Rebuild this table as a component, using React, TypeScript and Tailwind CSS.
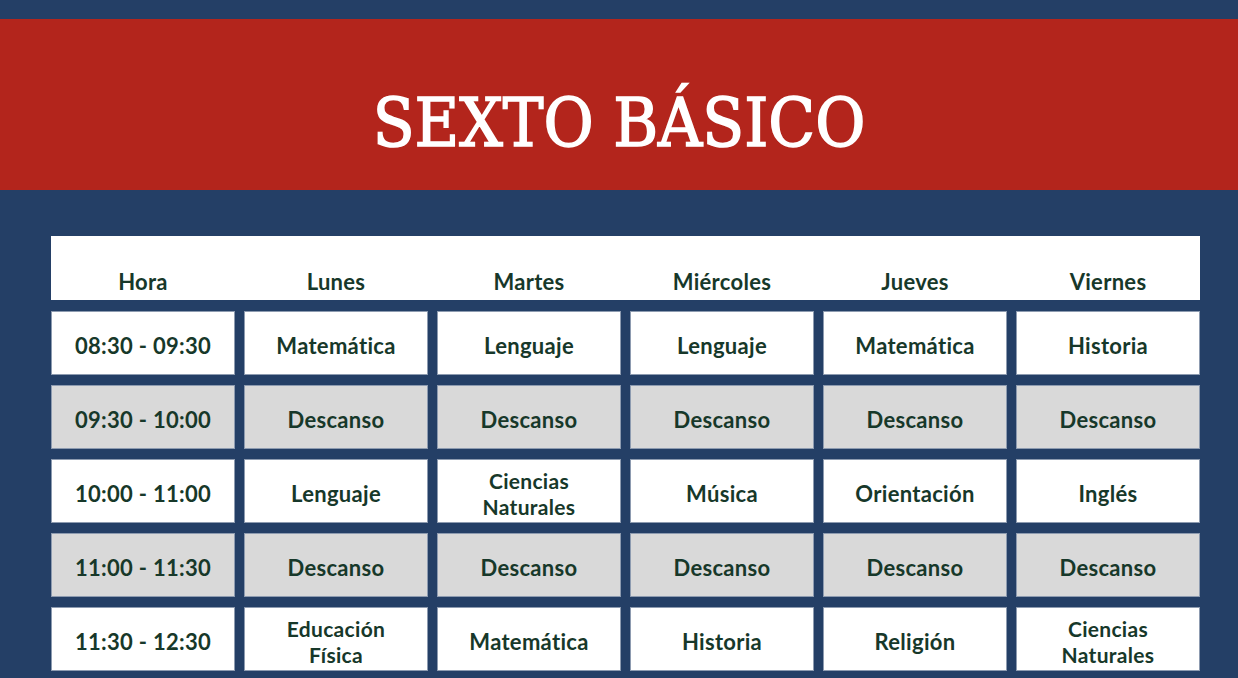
import React from 'react'

const days = ['Lunes', 'Martes', 'Miércoles', 'Jueves', 'Viernes']

const rows: { time: string; cells: string[][]; rest?: boolean }[] = [
  { time: '08:30 - 09:30', cells: [['Matemática'], ['Lenguaje'], ['Lenguaje'], ['Matemática'], ['Historia']] },
  { time: '09:30 - 10:00', cells: [['Descanso'], ['Descanso'], ['Descanso'], ['Descanso'], ['Descanso']], rest: true },
  { time: '10:00 - 11:00', cells: [['Lenguaje'], ['Ciencias', 'Naturales'], ['Música'], ['Orientación'], ['Inglés']] },
  { time: '11:00 - 11:30', cells: [['Descanso'], ['Descanso'], ['Descanso'], ['Descanso'], ['Descanso']], rest: true },
  { time: '11:30 - 12:30', cells: [['Educación', 'Física'], ['Matemática'], ['Historia'], ['Religión'], ['Ciencias', 'Naturales']] },
]

const Cell = ({ lines, rest }: { lines: string[]; rest?: boolean }) => (
  <div
    className={`h-[64px] flex items-center justify-center pt-[6px] border border-[#8d9bb0] ${
      rest ? 'bg-[#d9d9d9]' : 'bg-white'
    }`}
  >
    <p className={`text-center ${lines.length > 1 ? 'text-[21px] leading-[26px]' : 'leading-[24px]'}`}>
      {lines.map((l, i) => (
        <React.Fragment key={l}>
          {i > 0 && <br />}
          {l}
        </React.Fragment>
      ))}
    </p>
  </div>
)

export default function App() {
  return (
    <div className="w-[1238px] h-[678px] overflow-hidden bg-[#243f66] pt-[19px]">
      {/* banner */}
      <div className="h-[171px] bg-[#b3251c] flex items-center justify-center">
        <h1 className="text-white text-[68px] leading-none pt-[36px] [-webkit-text-stroke:1.5px_white] font-['DejaVu_Serif_Condensed','DejaVu_Serif',serif]">
          SEXTO BÁSICO
        </h1>
      </div>

      {/* schedule */}
      <div className="ml-[51px] w-[1149px] mt-[46px] font-['Lato',sans-serif] font-bold text-[22px] tracking-[0.3px] text-[#17382a]">
        <div className="h-[64px] bg-white grid grid-cols-6 gap-[9px] items-end pb-[2px]">
          <span className="text-center">Hora</span>
          {days.map((d) => (
            <span key={d} className="text-center">{d}</span>
          ))}
        </div>
        <div className="mt-[11px] flex flex-col gap-[10px]">
          {rows.map((r) => (
            <div key={r.time} className="grid grid-cols-6 gap-[9px]">
              <Cell lines={[r.time]} rest={r.rest} />
              {r.cells.map((c, i) => (
                <Cell key={i} lines={c} rest={r.rest} />
              ))}
            </div>
          ))}
        </div>
      </div>
    </div>
  )
}
